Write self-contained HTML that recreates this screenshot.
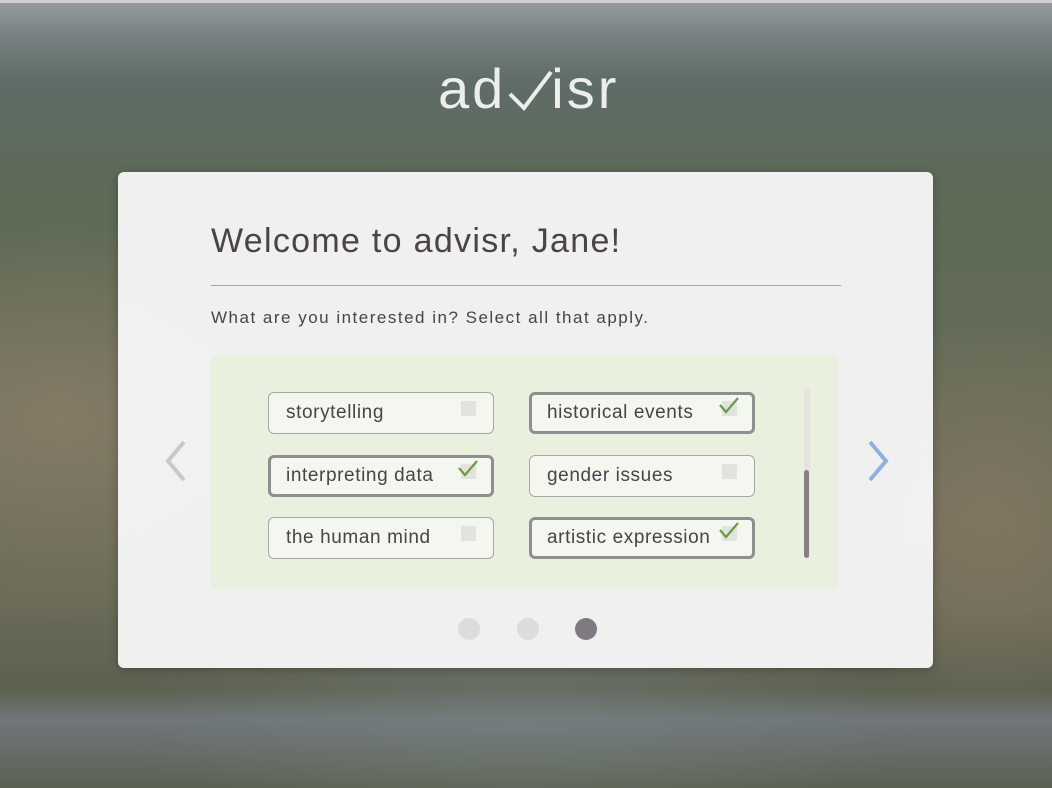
<!DOCTYPE html>
<html><head><style>
*{margin:0;padding:0;box-sizing:border-box}
body{width:1052px;height:788px;overflow:hidden;position:relative;font-family:"Liberation Sans",sans-serif;
background:
radial-gradient(ellipse 300px 200px at 60px 420px, rgba(170,140,120,.45), transparent),
radial-gradient(ellipse 200px 200px at 990px 520px, rgba(160,130,110,.45), transparent),
radial-gradient(ellipse 400px 120px at 520px 720px, rgba(120,130,130,.5), transparent),
linear-gradient(180deg,#9a9ea0 0px,#7b8585 30px,#5f6c68 80px,#5d6a55 200px,#676d58 400px,#6a6b57 600px,#5c6150 690px,#70767a 720px,#5b6150 788px);}
.top{position:absolute;left:0;top:0;width:1052px;height:3px;background:#cfcfcf}
.logo{position:absolute;left:438px;top:54px;font-size:56px;color:#ecedee;letter-spacing:3px;line-height:70px}
.logo svg{position:absolute;left:70px;top:14px}
.card{position:absolute;left:118px;top:172px;width:815px;height:496px;background:rgba(245,245,245,.97);border-radius:6px;box-shadow:0 2px 10px rgba(0,0,0,.25)}
h1{position:absolute;left:93px;top:50px;font-weight:normal;font-size:34px;color:#4a4347;letter-spacing:1.3px}
.hr{position:absolute;left:93px;top:113px;width:630px;height:1px;background:#a9a6a7}
.sub{position:absolute;left:93px;top:136px;font-size:17px;color:#4a4347;letter-spacing:1.5px}
.panel{position:absolute;left:93px;top:184px;width:627px;height:233px;background:#e9f0dd;border-radius:6px}
.chip{position:absolute;width:226px;height:42px;border:1px solid #a6a6a6;border-radius:6px;background:#f4f6f0;font-size:19px;color:#4a4347;padding:9px 0 0 17px;letter-spacing:.6px}
.chip.on{border:3px solid #8f8f8f;padding:7px 0 0 15px}
.box{position:absolute;right:17px;top:8px;width:15px;height:15px;background:#e1e3df}
.on .box{right:15px;top:6px}
.chk{position:absolute;right:14px;top:3px}
.on .chk{right:12px;top:1px}
.track{position:absolute;width:6px;height:170px;background:#e3e5e0;border-radius:3px}
.thumb{position:absolute;width:5px;height:88px;background:#848086;border-radius:3px}
.dot{position:absolute;width:22px;height:22px;border-radius:50%;background:#dcdcdc}
</style></head><body>
<div class="top"></div>
<div class="logo">ad<span style="display:inline-block;width:45px"></span>isr
<svg width="46" height="48" viewBox="0 0 46 48"><path d="M2 26 L16 40 L43 4" fill="none" stroke="#ecedee" stroke-width="4"/></svg></div>
<div class="card">
<h1>Welcome to advisr, Jane!</h1>
<div class="hr"></div>
<div class="sub">What are you interested in? Select all that apply.</div>
<div class="panel"></div>
</div>
<svg style="position:absolute;left:162px;top:440px" width="26" height="42"><path d="M22 2 L6 21 L22 40" fill="none" stroke="#c8c9c6" stroke-width="4"/></svg>
<svg style="position:absolute;left:866px;top:440px" width="26" height="42"><path d="M4 2 L20 21 L4 40" fill="none" stroke="#8fb1e0" stroke-width="4"/></svg>
<div class="chip" style="left:268px;top:392px">storytelling<div class="box"></div></div>
<div class="chip on" style="left:529px;top:392px">historical events<div class="box"></div><svg class="chk" width="22" height="20"><path d="M2 9 L8 16 L20 2" fill="none" stroke="#6f9a45" stroke-width="2.2"/></svg></div>
<div class="chip on" style="left:268px;top:455px">interpreting data<div class="box"></div><svg class="chk" width="22" height="20"><path d="M2 9 L8 16 L20 2" fill="none" stroke="#6f9a45" stroke-width="2.2"/></svg></div>
<div class="chip" style="left:529px;top:455px">gender issues<div class="box"></div></div>
<div class="chip" style="left:268px;top:517px">the human mind<div class="box"></div></div>
<div class="chip on" style="left:529px;top:517px">artistic expression<div class="box"></div><svg class="chk" width="22" height="20"><path d="M2 9 L8 16 L20 2" fill="none" stroke="#6f9a45" stroke-width="2.2"/></svg></div>
<div class="track" style="left:804px;top:388px"></div>
<div class="thumb" style="left:804px;top:470px"></div>
<div class="dot" style="left:458px;top:618px"></div>
<div class="dot" style="left:517px;top:618px"></div>
<div class="dot" style="left:575px;top:618px;background:#7f7a81"></div>
</body></html>
